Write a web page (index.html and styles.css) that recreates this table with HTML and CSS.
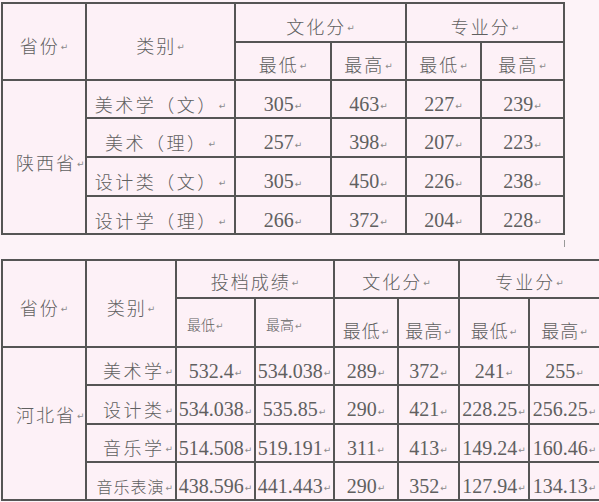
FILE: index.html
```html
<!DOCTYPE html>
<html lang="zh">
<head>
<meta charset="utf-8">
<title>分数线</title>
<link rel="stylesheet" href="styles.css">
</head>
<body>
<div class="page">
  <div class="grid t1">
    <div class="cell r2 hd">省份<span class="m">↵</span></div>
    <div class="cell r2 hd">类别<span class="m">↵</span></div>
    <div class="cell c2 hd">文化分<span class="m">↵</span></div>
    <div class="cell c2 hd">专业分<span class="m">↵</span></div>
    <div class="cell hd">最低<span class="m">↵</span></div>
    <div class="cell hd">最高<span class="m">↵</span></div>
    <div class="cell hd">最低<span class="m">↵</span></div>
    <div class="cell hd">最高<span class="m">↵</span></div>

    <div class="cell r4 prov">陕西省<span class="m">↵</span></div>
    <div class="cell cat">美术学（文）<span class="m">↵</span></div>
    <div class="cell num">305<span class="m">↵</span></div>
    <div class="cell num">463<span class="m">↵</span></div>
    <div class="cell num">227<span class="m">↵</span></div>
    <div class="cell num">239<span class="m">↵</span></div>

    <div class="cell cat">美术（理）<span class="m">↵</span></div>
    <div class="cell num">257<span class="m">↵</span></div>
    <div class="cell num">398<span class="m">↵</span></div>
    <div class="cell num">207<span class="m">↵</span></div>
    <div class="cell num">223<span class="m">↵</span></div>

    <div class="cell cat">设计类（文）<span class="m">↵</span></div>
    <div class="cell num">305<span class="m">↵</span></div>
    <div class="cell num">450<span class="m">↵</span></div>
    <div class="cell num">226<span class="m">↵</span></div>
    <div class="cell num">238<span class="m">↵</span></div>

    <div class="cell cat">设计学（理）<span class="m">↵</span></div>
    <div class="cell num">266<span class="m">↵</span></div>
    <div class="cell num">372<span class="m">↵</span></div>
    <div class="cell num">204<span class="m">↵</span></div>
    <div class="cell num">228<span class="m">↵</span></div>
  </div>

  <div class="between"><span class="tick"></span></div>

  <div class="grid t2">
    <div class="cell r2 hd">省份<span class="m">↵</span></div>
    <div class="cell r2 hd">类别<span class="m">↵</span></div>
    <div class="cell c2 hd top">投档成绩<span class="m">↵</span></div>
    <div class="cell c2 hd top">文化分<span class="m">↵</span></div>
    <div class="cell c2 hd top">专业分<span class="m">↵</span></div>
    <div class="cell sm">最低<span class="m">↵</span></div>
    <div class="cell sm">最高<span class="m">↵</span></div>
    <div class="cell hd sub">最低<span class="m">↵</span></div>
    <div class="cell hd sub">最高<span class="m">↵</span></div>
    <div class="cell hd sub">最低<span class="m">↵</span></div>
    <div class="cell hd sub">最高<span class="m">↵</span></div>

    <div class="cell r4 prov2">河北省<span class="m">↵</span></div>
    <div class="cell cat2">美术学<span class="m">↵</span></div>
    <div class="cell num">532.4<span class="m">↵</span></div>
    <div class="cell num">534.038<span class="m">↵</span></div>
    <div class="cell num">289<span class="m">↵</span></div>
    <div class="cell num">372<span class="m">↵</span></div>
    <div class="cell num">241<span class="m">↵</span></div>
    <div class="cell num">255<span class="m">↵</span></div>

    <div class="cell cat2">设计类<span class="m">↵</span></div>
    <div class="cell num">534.038<span class="m">↵</span></div>
    <div class="cell num">535.85<span class="m">↵</span></div>
    <div class="cell num">290<span class="m">↵</span></div>
    <div class="cell num">421<span class="m">↵</span></div>
    <div class="cell num">228.25<span class="m">↵</span></div>
    <div class="cell num">256.25<span class="m">↵</span></div>

    <div class="cell cat2">音乐学<span class="m">↵</span></div>
    <div class="cell num">514.508<span class="m">↵</span></div>
    <div class="cell num">519.191<span class="m">↵</span></div>
    <div class="cell num">311<span class="m">↵</span></div>
    <div class="cell num">413<span class="m">↵</span></div>
    <div class="cell num">149.24<span class="m">↵</span></div>
    <div class="cell num">160.46<span class="m">↵</span></div>

    <div class="cell cat3">音乐表演<span class="m">↵</span></div>
    <div class="cell num">438.596<span class="m">↵</span></div>
    <div class="cell num">441.443<span class="m">↵</span></div>
    <div class="cell num">290<span class="m">↵</span></div>
    <div class="cell num">352<span class="m">↵</span></div>
    <div class="cell num">127.94<span class="m">↵</span></div>
    <div class="cell num">134.13<span class="m">↵</span></div>
  </div>
</div>
</body>
</html>
```

FILE: styles.css
```css
html, body {
  margin: 0;
  padding: 0;
  background: #fdf3f8;
  overflow: hidden;
}

.page {
  padding: 2px 0 0 1px;
  font-family: "Liberation Serif", "Noto Sans CJK SC", serif;
  color: #606060;
}

.grid {
  display: grid;
  width: max-content;
  gap: 2px;
  padding: 2px;
  background: #555;
}

.t1 {
  grid-template-columns: 82px 147px 94px 73px 73px 81px;
  grid-template-rows: 37px 36px 36px 37px 37px 36px;
}

.t2 {
  grid-template-columns: 82px 88px 77px 77px 62px 59px 68px 69px;
  grid-template-rows: 36px 47px 36px 37px 36px 36px;
}

.cell {
  background: #fdf1f7;
  display: flex;
  align-items: center;
  justify-content: center;
  padding-top: 6px;
  box-sizing: border-box;
  white-space: nowrap;
  overflow: hidden;
}

.r2 { grid-row: span 2; }
.r4 { grid-row: span 4; }
.c2 { grid-column: span 2; }

.hd, .sm, .prov, .prov2, .cat, .cat2, .cat3 {
  font-family: "Noto Sans CJK SC", sans-serif;
  font-weight: 300;
}

.hd {
  font-size: 18px;
  letter-spacing: 2px;
}

.top { padding-top: 4px; }
.sub { padding-top: 14px; letter-spacing: 1px; }

.sm {
  font-size: 14px;
  justify-content: flex-start;
  padding-left: 10px;
  padding-top: 2px;
}

.prov {
  font-size: 18px;
  letter-spacing: 2px;
  justify-content: flex-start;
  padding-left: 13px;
  padding-top: 10px;
}

.prov2 {
  font-size: 18px;
  letter-spacing: 2px;
  justify-content: flex-start;
  padding-left: 13px;
  padding-top: 0;
  padding-bottom: 20px;
}

.cat {
  font-size: 18px;
  letter-spacing: 2.5px;
  padding-top: 9px;
}

.cat2 {
  font-size: 18px;
  letter-spacing: 2.5px;
  justify-content: flex-end;
  padding-right: 2px;
  padding-top: 8px;
}

.cat3 {
  font-size: 16px;
  letter-spacing: 1px;
  justify-content: flex-end;
  padding-right: 2px;
  padding-top: 9px;
}

.num {
  font-size: 20px;
  padding-top: 10px;
}

.m {
  font-family: "DejaVu Sans", sans-serif;
  font-weight: normal;
  font-size: 9px;
  letter-spacing: 0;
  color: #8a8a8a;
  margin-left: 1px;
  align-self: center;
  padding-top: 4px;
}

.between {
  height: 24px;
  display: flex;
}

.tick {
  width: 1px;
  height: 7px;
  background: #999;
  margin: 5px 0 0 563px;
}
```
